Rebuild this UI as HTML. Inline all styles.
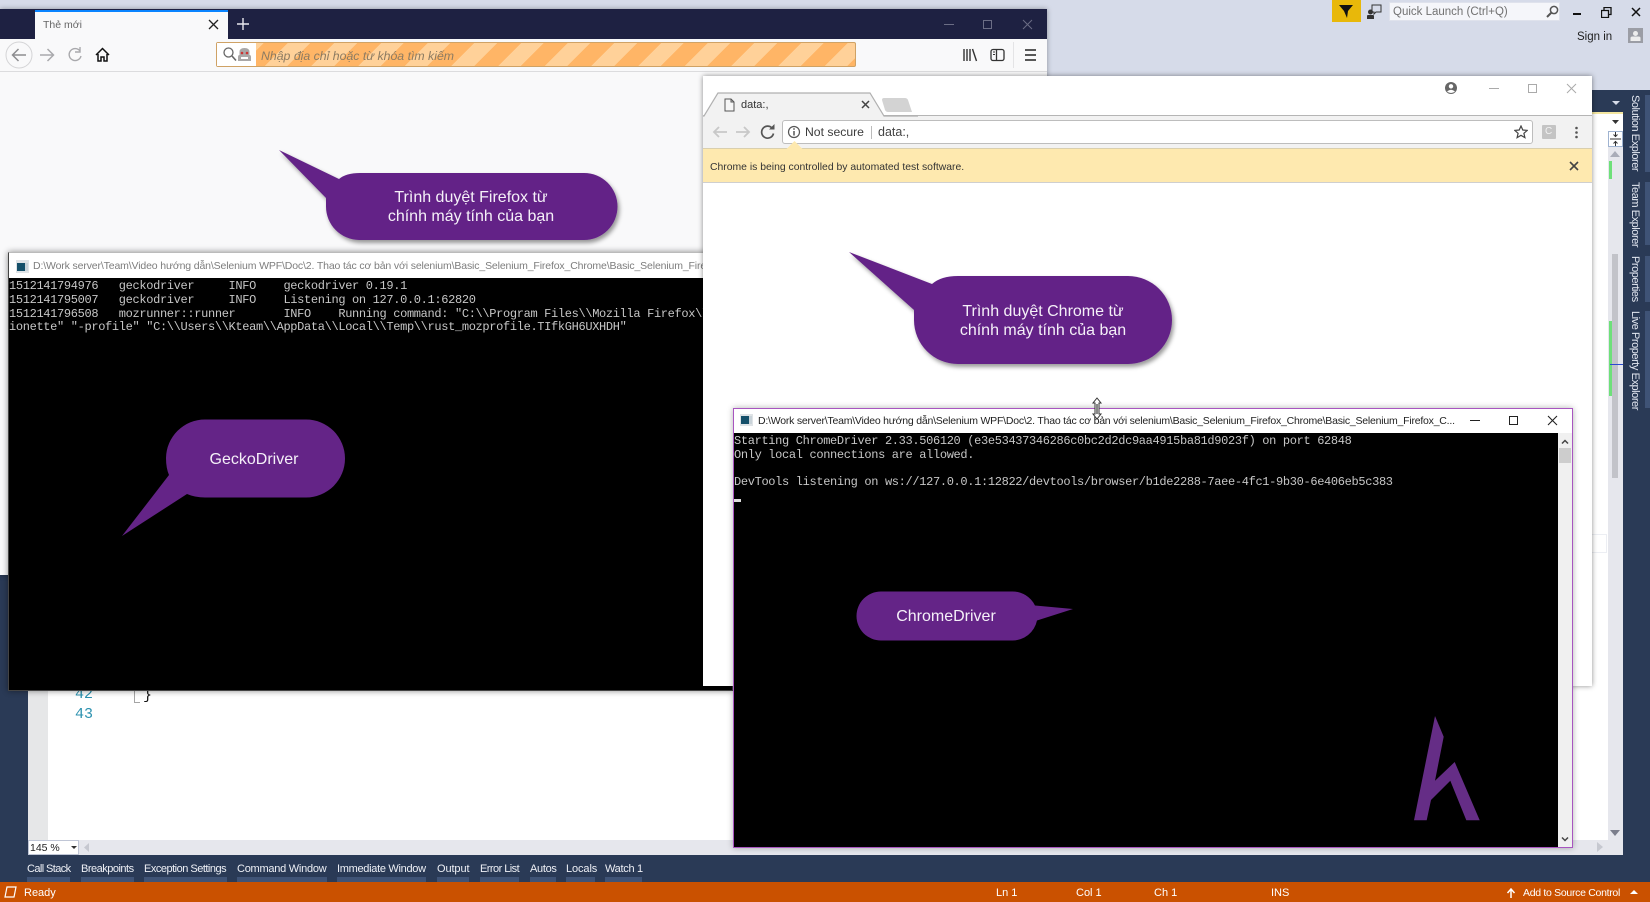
<!DOCTYPE html>
<html lang="vi"><head><meta charset="utf-8"><title>Selenium</title>
<style>
html,body{margin:0;padding:0;width:1650px;height:902px;overflow:hidden;background:#2a3a56}
body{position:relative;font-family:"Liberation Sans","Noto Sans CJK JP",sans-serif;filter:blur(.3px)}
div,span,svg{position:absolute;box-sizing:border-box}
.t{white-space:pre;line-height:14px}
.con{font-family:"Liberation Mono",monospace;font-size:12px;letter-spacing:-.34px;color:#c6c6c6;white-space:pre;line-height:13.75px}
.tab{top:862px;color:#eef0f6;font-size:11px;line-height:14px;white-space:pre}
.ul{top:877px;height:5px;background:#3f5376}
.st{top:886px;color:#fff;font-size:11px;line-height:14px;white-space:pre}
.vt{color:#e4e8f2;font-size:11px;letter-spacing:-.45px;line-height:14px;white-space:pre;transform-origin:0 0;transform:rotate(90deg);left:1642px}
.vs{left:1645px;width:5px;background:#3f5376}
</style></head><body>

<!-- VS shell -->
<div style="left:0;top:0;width:1650px;height:90px;background:#d6dbe9"></div>
<div style="left:28px;top:113px;width:1595px;height:742px;background:#fff"></div>
<div style="left:28px;top:300px;width:20px;height:540px;background:#e6e7e8"></div>
<div style="left:1592px;top:112px;width:31px;height:2px;background:#f3e6a0"></div>
<div style="left:1592px;top:114px;width:31px;height:17px;background:#fff"></div>
<svg style="left:1612px;top:120px" width="8" height="5"><path d="M0 0h7l-3.500 4z" fill="#333"/></svg>
<svg style="left:1612px;top:101px" width="10" height="6"><path d="M0 0h8l-4 4z" fill="#d6dbe9"/></svg>
<div style="left:1608px;top:131px;width:15px;height:724px;background:#e6e7ed"></div>
<div style="left:1608px;top:131px;width:15px;height:16px;background:#fff;border:1px solid #9fb3d1"></div>
<svg style="left:1609px;top:132px" width="13" height="14"><path d="M1 7h11M6.500 0v5M6.500 9v5M4.500 2.500l2 2 2-2M4.500 11.500l2-2 2 2" stroke="#333" fill="none" stroke-width="1"/></svg>
<svg style="left:1610px;top:151px" width="11" height="7"><path d="M0 6h10l-5-6z" fill="#a9acb8"/></svg>
<div style="left:1609px;top:161px;width:3px;height:18px;background:#6ee07a"></div>
<div style="left:1612px;top:254px;width:6px;height:224px;background:#c2c3c9"></div>
<div style="left:1609px;top:321px;width:3px;height:75px;background:#6ee07a"></div>
<div style="left:1610px;top:364px;width:13px;height:1px;background:#2a4ad0"></div>
<svg style="left:1610px;top:830px" width="11" height="7"><path d="M0 0h10l-5 6z" fill="#7b7e8c"/></svg>
<div style="left:1592px;top:534px;width:15px;height:19px;border:1px solid #eceef3;border-left:0"></div>
<div style="left:28px;top:840px;width:1595px;height:15px;background:#e6e7ed"></div>
<div style="left:28px;top:840px;width:51px;height:15px;background:#fff;border:1px solid #c0c6d6"></div>
<div class="t" style="left:30px;top:841px;font-size:10.500px;color:#222">145 %</div>
<svg style="left:71px;top:846px" width="7" height="4"><path d="M0 0h6l-3 3z" fill="#333"/></svg>
<svg style="left:84px;top:843px" width="6" height="10"><path d="M5 0v9L0 4.500z" fill="#c6c8d0"/></svg>
<svg style="left:1597px;top:842px" width="7" height="11"><path d="M0 0v10l6-5z" fill="#c6c8d0"/></svg>
<div class="t" style="left:75px;top:686px;font:15px/18px 'Liberation Mono',monospace;color:#2b91af">42</div>
<div class="t" style="left:75px;top:706px;font:15px/18px 'Liberation Mono',monospace;color:#2b91af">43</div>
<div style="left:134px;top:690px;width:6px;height:13px;border-left:1px solid #a5a5a5;border-bottom:1px solid #a5a5a5"></div>
<div class="t" style="left:143px;top:687px;font:15px/18px 'Liberation Mono',monospace;color:#111">}</div>

<!-- top right of VS -->
<div style="left:1332px;top:0;width:29px;height:22px;background:#e8b80a"></div>
<svg style="left:1339px;top:5px" width="15" height="13"><path d="M0 0h14L9 6l-1 7-3-7z" fill="#111"/></svg>
<svg style="left:1367px;top:4px" width="16" height="15"><path d="M5 1h9v7H9l-2 2V8H5z" fill="none" stroke="#333"/><circle cx="3.500" cy="8" r="2.500" fill="#333"/><path d="M0 15v-3q0-1 1-1h5q1 0 1 1v3z" fill="#333"/></svg>
<div style="left:1389px;top:2px;width:171px;height:19px;background:#f5f6fa;border:1px solid #dfe2ec"></div>
<div class="t" style="left:1393px;top:5px;font-size:11.500px;color:#717171">Quick Launch (Ctrl+Q)</div>
<svg style="left:1546px;top:5px" width="13" height="13"><circle cx="8" cy="5" r="3.600" fill="none" stroke="#555" stroke-width="1.500"/><path d="M5.500 7.500L1 12" stroke="#555" stroke-width="2"/></svg>
<div style="left:1573px;top:13px;width:8px;height:2px;background:#111"></div>
<svg style="left:1601px;top:7px" width="11" height="11"><path d="M3 3V.5h7v7H7.500M.5 3.500h7v7h-7z" fill="none" stroke="#111" stroke-width="1.300"/></svg>
<svg style="left:1631px;top:7px" width="10" height="10"><path d="M1 1l8 8M9 1l-8 8" stroke="#111" stroke-width="1.500"/></svg>
<div class="t" style="left:1577px;top:30px;font-size:11.500px;color:#1e1e1e">Sign in</div>
<div style="left:1628px;top:28px;width:15px;height:15px;background:#9b9da5"></div>
<svg style="left:1628px;top:28px" width="15" height="15"><circle cx="7.500" cy="5.500" r="2.500" fill="#eee"/><path d="M2.500 13v-3q0-1.500 2-1.500h6q2 0 2 1.500v3z" fill="#eee"/></svg>

<!-- right vertical tabs -->
<div class="vs" style="top:95px;height:77px"></div>
<div class="vs" style="top:182px;height:63px"></div>
<div class="vs" style="top:256px;height:46px"></div>
<div class="vs" style="top:311px;height:97px"></div>
<div class="vt" style="top:95px">Solution Explorer</div>
<div class="vt" style="top:182px">Team Explorer</div>
<div class="vt" style="top:256px">Properties</div>
<div class="vt" style="top:311px">Live Property Explorer</div>

<!-- bottom tabs -->
<div class="tab" style="left:27px;letter-spacing:-.6px">Call Stack</div><div class="ul" style="left:27px;width:43px"></div>
<div class="tab" style="left:81px;letter-spacing:-.5px">Breakpoints</div><div class="ul" style="left:81px;width:53px"></div>
<div class="tab" style="left:144px;letter-spacing:-.5px">Exception Settings</div><div class="ul" style="left:144px;width:83px"></div>
<div class="tab" style="left:237px;letter-spacing:-.25px">Command Window</div><div class="ul" style="left:237px;width:90px"></div>
<div class="tab" style="left:337px;letter-spacing:-.3px">Immediate Window</div><div class="ul" style="left:337px;width:89px"></div>
<div class="tab" style="left:437px;letter-spacing:-.1px">Output</div><div class="ul" style="left:437px;width:32px"></div>
<div class="tab" style="left:480px;letter-spacing:-.55px">Error List</div><div class="ul" style="left:480px;width:39px"></div>
<div class="tab" style="left:530px;letter-spacing:-.3px">Autos</div><div class="ul" style="left:530px;width:26px"></div>
<div class="tab" style="left:566px;letter-spacing:-.1px">Locals</div><div class="ul" style="left:566px;width:29px"></div>
<div class="tab" style="left:605px;letter-spacing:-.3px">Watch 1</div><div class="ul" style="left:605px;width:37px"></div>

<!-- status bar -->
<div style="left:0;top:882px;width:1650px;height:20px;background:#ca5100"></div>
<svg style="left:3px;top:886px" width="15" height="13"><path d="M4 1h9l-2 10H2z" fill="none" stroke="#fff" stroke-width="1.200"/></svg>
<div class="st" style="left:24px">Ready</div>
<div class="st" style="left:996px">Ln 1</div>
<div class="st" style="left:1076px">Col 1</div>
<div class="st" style="left:1154px">Ch 1</div>
<div class="st" style="left:1271px">INS</div>
<svg style="left:1506px;top:888px" width="10" height="11"><path d="M5 10V2M1.500 5L5 1l3.500 4" stroke="#fff" fill="none" stroke-width="1.500"/></svg>
<div class="st" style="left:1523px;font-size:10.500px;letter-spacing:-.3px">Add to Source Control</div>
<svg style="left:1630px;top:890px" width="9" height="5"><path d="M0 4h8L4 0z" fill="#fff"/></svg>

<!-- Firefox -->
<div style="left:0;top:9px;width:1047px;height:566px;background:#f9f9fa;box-shadow:0 0 5px rgba(0,0,0,.35)"></div>
<div style="left:0;top:9px;width:1047px;height:30px;background:#1e2142"></div>
<div style="left:35px;top:10px;width:193px;height:29px;background:#f9f9fa;border-top:2px solid #0a84ff"></div>
<div class="t" style="left:43px;top:18px;font-size:10.500px;color:#666">Thẻ mới</div>
<svg style="left:208px;top:19px" width="11" height="11"><path d="M1 1l9 9M10 1l-9 9" stroke="#222" stroke-width="1.300"/></svg>
<svg style="left:236px;top:17px" width="14" height="14"><path d="M7 1v12M1 7h12" stroke="#e8e8ee" stroke-width="1.400"/></svg>
<div style="left:944px;top:24px;width:10px;height:1px;background:#6b6d85"></div>
<div style="left:983px;top:20px;width:9px;height:9px;border:1px solid #6b6d85"></div>
<svg style="left:1022px;top:19px" width="11" height="11"><path d="M1 1l9 9M10 1l-9 9" stroke="#6b6d85" stroke-width="1"/></svg>
<div style="left:0;top:39px;width:1047px;height:33px;background:#f9f9fa;border-bottom:1px solid #dcdcde"></div>
<svg style="left:4px;top:40px" width="112" height="30" fill="none"><circle cx="15" cy="15" r="13" fill="#f9f9fa" stroke="#d4d4d6"/><path d="M22 15H9M14.500 9l-6 6 6 6" stroke="#8d8d90" stroke-width="1.500"/><path d="M36 15h13M43.500 9l6 6-6 6" stroke="#a9a9ac" stroke-width="1.500"/><path d="M76 11a6 6 0 1 0 1 5M76 7v5h-5" stroke="#a9a9ac" stroke-width="1.400"/><path d="M92 15l6.500-6.500L105 15M94 14v7h3v-4h3v4h3v-7" stroke="#111" stroke-width="1.500"/></svg>
<div style="left:216px;top:42px;width:640px;height:25px;border:1px solid #cfa265;border-radius:2px;background:repeating-linear-gradient(135deg,#ffb566 0,#ffb566 17px,#ffd199 17px,#ffd199 33px);overflow:hidden"></div>
<div style="left:217px;top:43px;width:39px;height:23px;background:#fff"></div>
<svg style="left:222px;top:46px" width="32" height="17"><circle cx="6.500" cy="6.500" r="4.500" fill="none" stroke="#666" stroke-width="1.300"/><path d="M10 10l4 4.500" stroke="#666" stroke-width="1.600"/><path d="M16 15v-4q0-2 1.500-2V6q0-4 5-4t5 4v3q1.500 0 1.500 2v4z" fill="#a9a7a7"/><circle cx="20" cy="7" r="1.300" fill="#c33"/><circle cx="25" cy="7" r="1.300" fill="#c33"/><path d="M19 11h7v2h-7z" fill="#fff"/></svg>
<div class="t" style="left:261px;top:49px;font-size:12.300px;font-style:italic;color:#8c7b62">Nhập địa chỉ hoặc từ khóa tìm kiếm</div>
<svg style="left:962px;top:47px" width="76" height="16" fill="none"><path d="M2 2v12M5 2v12M8 2v12M10.500 2l4 12" stroke="#333" stroke-width="1.400"/><rect x="29" y="2.500" width="13" height="11" rx="2" stroke="#333" stroke-width="1.300"/><path d="M34.500 2.500v11" stroke="#333" stroke-width="1.300"/><path d="M31 5h2M31 7.500h2" stroke="#333"/><path d="M63 3h11M63 8h11M63 13h11" stroke="#222" stroke-width="1.500"/></svg>
<div style="left:1013px;top:42px;width:1px;height:26px;background:#e4e4e6"></div>

<!-- Console 1 -->
<div style="left:8px;top:252px;width:725px;height:439px;background:#000;box-shadow:0 0 6px rgba(0,0,0,.45);border:1px solid #444;border-top-color:#bbb"></div>
<div style="left:9px;top:253px;width:719px;height:25px;background:#fff"></div>
<svg style="left:16px;top:260px" width="13" height="13"><rect width="13" height="13" fill="#dfe3e6"/><rect x="1" y="3" width="8" height="8" fill="#15506a"/><rect x="9" y="3" width="3" height="8" fill="#c9d3d9"/></svg>
<div class="t" style="left:33px;top:259px;font-size:10.500px;color:#7d7d7d;letter-spacing:-.14px;width:670px;overflow:hidden">D:\Work server\Team\Video hướng dẫn\Selenium WPF\Doc\2. Thao tác cơ bản với selenium\Basic_Selenium_Firefox_Chrome\Basic_Selenium_Firefox_Chrome</div>
<div class="con" style="left:9px;top:280px;width:694px;height:60px;overflow:hidden">1512141794976   geckodriver     INFO    geckodriver 0.19.1
1512141795007   geckodriver     INFO    Listening on 127.0.0.1:62820
1512141796508   mozrunner::runner       INFO    Running command: "C:\\Program Files\\Mozilla Firefox\\firefox.exe"
ionette" "-profile" "C:\\Users\\Kteam\\AppData\\Local\\Temp\\rust_mozprofile.TIfkGH6UXHDH"</div>

<!-- Chrome -->
<div style="left:703px;top:76px;width:889px;height:610px;background:#fff;box-shadow:0 0 5px rgba(0,0,0,.45)"></div>
<div style="left:703px;top:115px;width:889px;height:1px;background:#b5b5b5"></div>
<div style="left:703px;top:116px;width:889px;height:32px;background:#f2f2f2"></div>
<svg style="left:703px;top:90px" width="215" height="27"><path d="M0 26L14 3h153l14 23z" fill="#f2f2f2"/><path d="M0 26h1L15 3h152l14 23h34" fill="none" stroke="#b0b0b0" stroke-width="1.200"/><path d="M181 8h21q2 0 3 2l4 12h-24q-2 0-3-2l-3-10q0-2 2-2z" fill="#d3d3d3"/></svg>
<svg style="left:724px;top:98px" width="11" height="14"><path d="M1 1h6l3 3v9H1zM7 1v3h3" fill="#f6f6f6" stroke="#555"/></svg>
<div class="t" style="left:741px;top:98px;font-size:11px;color:#333">data:,</div>
<svg style="left:861px;top:100px" width="9" height="9"><path d="M1 1l7 7M8 1L1 8" stroke="#444" stroke-width="1.500"/></svg>
<svg style="left:710px;top:123px" width="70" height="18" fill="none"><path d="M17 9H4M9 4L4 9l5 5" stroke="#c8c8c8" stroke-width="1.800"/><path d="M26 9h13M34 4l5 5-5 5" stroke="#c8c8c8" stroke-width="1.800"/><path d="M62 5a6 6 0 1 0 1.500 5.500" stroke="#555" stroke-width="1.700"/><path d="M59 6.500h5.500V1z" fill="#555"/></svg>
<div style="left:782px;top:120px;width:751px;height:24px;background:#fff;border:1px solid #bdbdbd;border-radius:3px"></div>
<svg style="left:787px;top:125px" width="14" height="14"><circle cx="7" cy="7" r="5.500" fill="none" stroke="#555" stroke-width="1.200"/><path d="M7 6v4.500" stroke="#555" stroke-width="1.500"/><circle cx="7" cy="4" r=".9" fill="#555"/></svg>
<div class="t" style="left:805px;top:125px;font-size:12.200px;line-height:15px;color:#3c3c3c">Not secure</div>
<div style="left:871px;top:126px;width:1px;height:13px;background:#bbb"></div>
<div class="t" style="left:878px;top:125px;font-size:12.500px;line-height:15px;color:#444">data:,</div>
<svg style="left:1514px;top:125px" width="14" height="14"><path d="M7 1l1.800 4 4.400.4-3.300 2.900 1 4.300L7 10.300l-3.900 2.300 1-4.300L.8 5.400 5.200 5z" fill="none" stroke="#444" stroke-width="1.200"/></svg>
<div style="left:1542px;top:125px;width:14px;height:14px;background:#c4c4c4;border-radius:1px"></div>
<div class="t" style="left:1545px;top:125px;font-size:10px;color:#f2f2f2">C</div>
<svg style="left:1574px;top:126px" width="5" height="13"><circle cx="2.500" cy="2" r="1.300" fill="#555"/><circle cx="2.500" cy="6.500" r="1.300" fill="#555"/><circle cx="2.500" cy="11" r="1.300" fill="#555"/></svg>
<div style="left:703px;top:148px;width:889px;height:35px;background:#fee9af;border-top:1px solid #d9cfae;border-bottom:1px solid #cfcfcf"></div>
<svg style="left:786px;top:141px" width="18" height="9"><path d="M0 8.500L8.500 0 17 8.500z" fill="#fee9af"/></svg>
<div class="t" style="left:710px;top:161px;font-size:10.400px;color:#333">Chrome is being controlled by automated test software.</div>
<svg style="left:1569px;top:161px" width="10" height="10"><path d="M1 1l8 8M9 1L1 9" stroke="#444" stroke-width="1.600"/></svg>
<svg style="left:1444px;top:81px" width="14" height="14"><circle cx="7" cy="7" r="6" fill="#666"/><circle cx="7" cy="5.300" r="2.200" fill="#fff"/><path d="M3 10.500q4-3.500 8 0-4 3-8 0z" fill="#fff"/></svg>
<div style="left:1489px;top:88px;width:10px;height:1px;background:#aaa"></div>
<div style="left:1528px;top:84px;width:9px;height:9px;border:1px solid #aaa"></div>
<svg style="left:1566px;top:83px" width="11" height="11"><path d="M1 1l9 9M10 1l-9 9" stroke="#aaa"/></svg>

<!-- Console 2 -->
<div style="left:733px;top:408px;width:840px;height:440px;background:#000;border:1px solid #a855c0;box-shadow:0 0 6px rgba(0,0,0,.3)"></div>
<div style="left:734px;top:409px;width:838px;height:24px;background:#fff"></div>
<svg style="left:740px;top:414px" width="13" height="12"><rect width="13" height="12" fill="#dfe3e6"/><rect x="1" y="2" width="8" height="8" fill="#15506a"/><rect x="9" y="2" width="3" height="8" fill="#c9d3d9"/></svg>
<div class="t" style="left:758px;top:414px;font-size:10.500px;color:#222;letter-spacing:-.22px">D:\Work server\Team\Video hướng dẫn\Selenium WPF\Doc\2. Thao tác cơ bản với selenium\Basic_Selenium_Firefox_Chrome\Basic_Selenium_Firefox_C...</div>
<div style="left:1470px;top:420px;width:10px;height:1px;background:#222"></div>
<div style="left:1509px;top:416px;width:9px;height:9px;border:1px solid #222"></div>
<svg style="left:1547px;top:415px" width="11" height="11"><path d="M1 1l9 9M10 1l-9 9" stroke="#222" stroke-width="1.100"/></svg>
<div style="left:1558px;top:433px;width:14px;height:414px;background:#f0f0f0"></div>
<div style="left:1559px;top:448px;width:12px;height:15px;background:#cdcdcd"></div>
<svg style="left:1561px;top:439px" width="8" height="6"><path d="M1 4.500l3-3 3 3" fill="none" stroke="#444" stroke-width="1.500"/></svg>
<svg style="left:1561px;top:836px" width="8" height="6"><path d="M1 1.500l3 3 3-3" fill="none" stroke="#444" stroke-width="1.500"/></svg>
<div class="con" style="left:734px;top:435px">Starting ChromeDriver 2.33.506120 (e3e53437346286c0bc2d2dc9aa4915ba81d9023f) on port 62848
Only local connections are allowed.

DevTools listening on ws://127.0.0.1:12822/devtools/browser/b1de2288-7aee-4fc1-9b30-6e406eb5c383</div>
<div style="left:734px;top:499px;width:7px;height:3px;background:#ddd"></div>
<svg style="left:1090px;top:397px" width="14" height="24"><path d="M7 1l4 5H9v11h2l-4 5-4-5h2V6H3z" fill="#fff" stroke="#333"/><path d="M6 7h2v10H6z" fill="#888"/></svg>

<!-- Balloons and logo -->
<svg style="left:0;top:0" width="1650" height="902">
<defs><filter id="s" x="-10%" y="-10%" width="125%" height="130%"><feDropShadow dx="2" dy="3" stdDeviation="2" flood-color="#000" flood-opacity=".4"/></filter></defs>
<path filter="url(#s)" fill="#642487" d="M279 150L339 179Q346 173 360 173H584A33.500 33.500 0 0 1 584 240H359A33.500 33.500 0 0 1 326 206.500V198z"/>
<path filter="url(#s)" fill="#642487" d="M849 252L932 284Q941 276 958 276H1128A44 44 0 0 1 1128 364H958A44 44 0 0 1 914 320V310z"/>
<path fill="#642487" d="M122 536L169 475Q166 468 166 458A39 39 0 0 1 205 419.500H306A39 39 0 0 1 306 497.500H205Q195 497.500 187 494z"/>
<path fill="#642487" d="M1073 609L1035 605.500A25 25 0 0 0 1012 591.500H881A24.500 24.500 0 0 0 881 640.500H1012A25 25 0 0 0 1037 620.500z"/>
<path fill="#652d86" d="M1435 716L1443.700 736.700L1435 780.700L1454.700 762L1479.700 820.300H1466.300L1450.300 780.700L1431 800L1426.700 820.300H1414z"/>
<g font-family="'Liberation Sans','Noto Sans CJK JP',sans-serif" font-size="16" fill="#f5f0f8" text-anchor="middle">
<text x="471" y="202">Trình duyệt Firefox từ</text>
<text x="471" y="221">chính máy tính của bạn</text>
<text x="1043" y="316">Trình duyệt Chrome từ</text>
<text x="1043" y="335">chính máy tính của bạn</text>
<text x="254" y="464">GeckoDriver</text>
<text x="946" y="621">ChromeDriver</text>
</g>
</svg>
</body></html>
